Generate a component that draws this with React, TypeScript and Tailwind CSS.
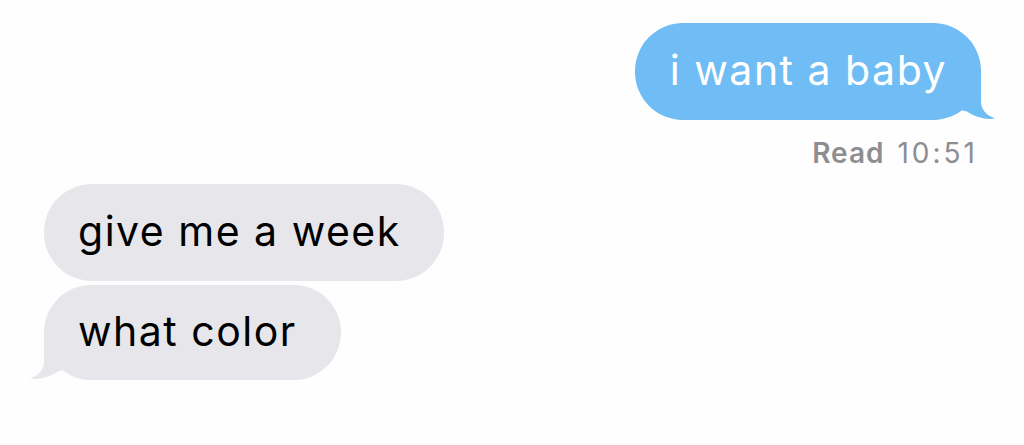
const Tail = ({ color, side }: { color: string; side: 'left' | 'right' }) => (
  <svg
    className={
      side === 'right'
        ? 'absolute right-[-20px] bottom-0'
        : 'absolute left-[-20px] bottom-0 -scale-x-100'
    }
    width="40"
    height="52"
    viewBox="0 0 40 52"
  >
    <path d="M0 0 L20 0 L20 33 C20 42 25 47 34 50.5 C25 52 15 49.5 6 43.5 L0 42 Z" fill={color} />
  </svg>
);

export default function App() {
  const bubbleText = 'text-[41px] leading-none tracking-[1.5px] pb-[3px]';

  return (
    <div className="w-[1024px] h-[445px] bg-[#fefefe] overflow-hidden font-['Inter','Liberation_Sans',sans-serif]">
      <div className="flex flex-col pt-[23px] pl-[44px] pr-[43px]">
        {/* outgoing */}
        <div className="flex justify-end">
          <div className="relative h-[97px] rounded-[48px] bg-[#6fbdf4] pl-[35px] pr-[34px] flex items-center">
            <span className={`text-white ${bubbleText}`}>i want a baby</span>
            <Tail color="#6fbdf4" side="right" />
          </div>
        </div>
        <div className="flex justify-end items-baseline mt-[16px] pr-[3px] text-[28px] leading-[34px] text-[#8d8d92]">
          <span className="font-semibold tracking-[1px]">Read</span>
          <span className="ml-[13px] tracking-[3px]">10:51</span>
        </div>

        {/* incoming */}
        <div className="flex flex-col items-start mt-[14px] gap-[4px]">
          <div className="h-[97px] rounded-[48px] bg-[#e6e6eb] pl-[34px] pr-[43px] flex items-center">
            <span className={`text-black ${bubbleText}`}>give me a week</span>
          </div>
          <div className="relative h-[95px] rounded-[48px] bg-[#e6e6eb] pl-[34px] pr-[44px] flex items-center">
            <span className={`text-black ${bubbleText}`}>what color</span>
            <Tail color="#e6e6eb" side="left" />
          </div>
        </div>
      </div>
    </div>
  );
}
